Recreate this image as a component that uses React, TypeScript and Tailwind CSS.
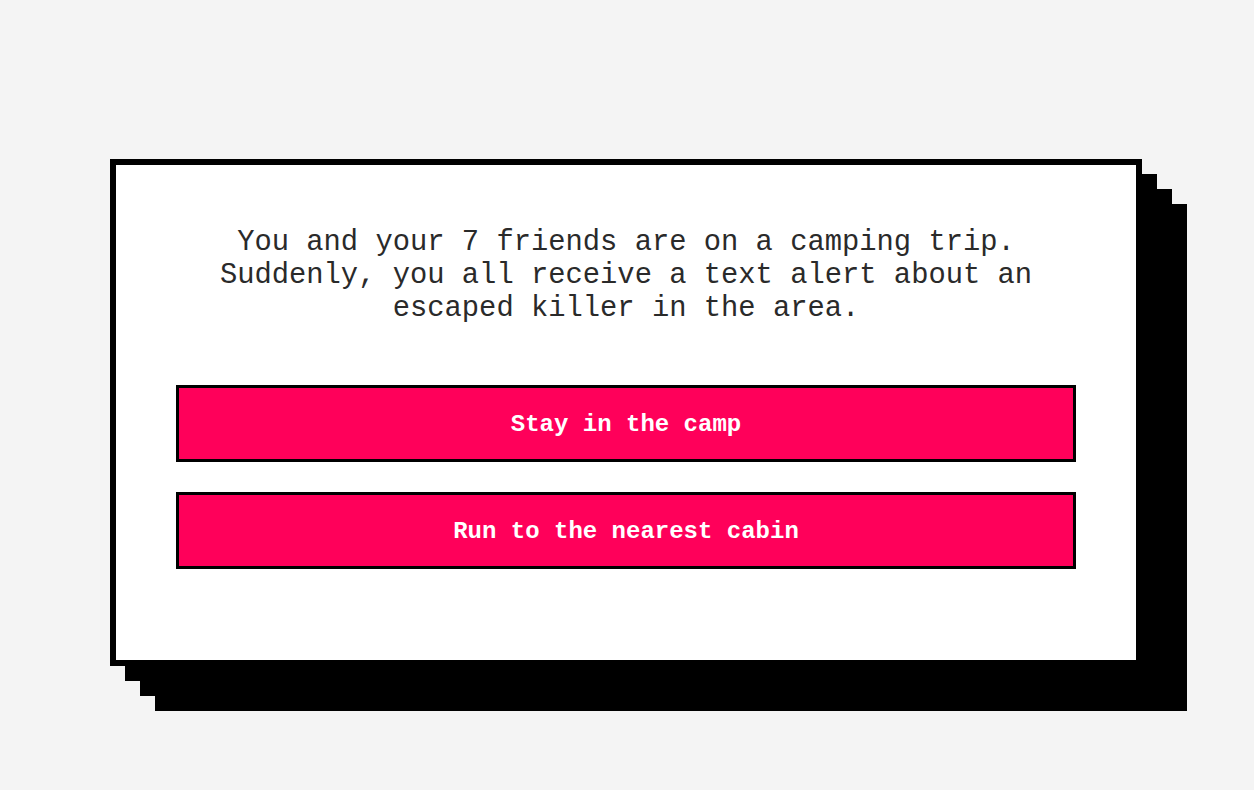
const choices = ['Stay in the camp', 'Run to the nearest cabin']

const ChoiceButton = ({ label }: { label: string }) => (
  <button
    type="button"
    className="mb-[30px] box-border flex h-[77px] w-full items-center justify-center border-[3px] border-black bg-[#ff005a] pt-[3px] text-[24px] font-bold text-white"
  >
    {label}
  </button>
)

export default function App() {
  return (
    <div
      className="min-h-[790px] w-full bg-[#f4f4f4] pt-[159px]"
      style={{ fontFamily: '"Liberation Mono", "Courier New", monospace' }}
    >
      <div className="ml-[110px] box-border w-[1032px] border-[6px] border-black bg-white px-[60px] pt-[60px] pb-[61px] shadow-[15px_15px_0_#000,30px_30px_0_#000,45px_45px_0_#000]">
        <p className="mb-[60px] pt-[1px] text-center text-[28.8px] leading-[33px] text-[#2a2a2a]">
          You and your 7 friends are on a camping trip. Suddenly, you all
          receive a text alert about an escaped killer in the area.
        </p>
        {choices.map((c) => (
          <ChoiceButton key={c} label={c} />
        ))}
      </div>
    </div>
  )
}
